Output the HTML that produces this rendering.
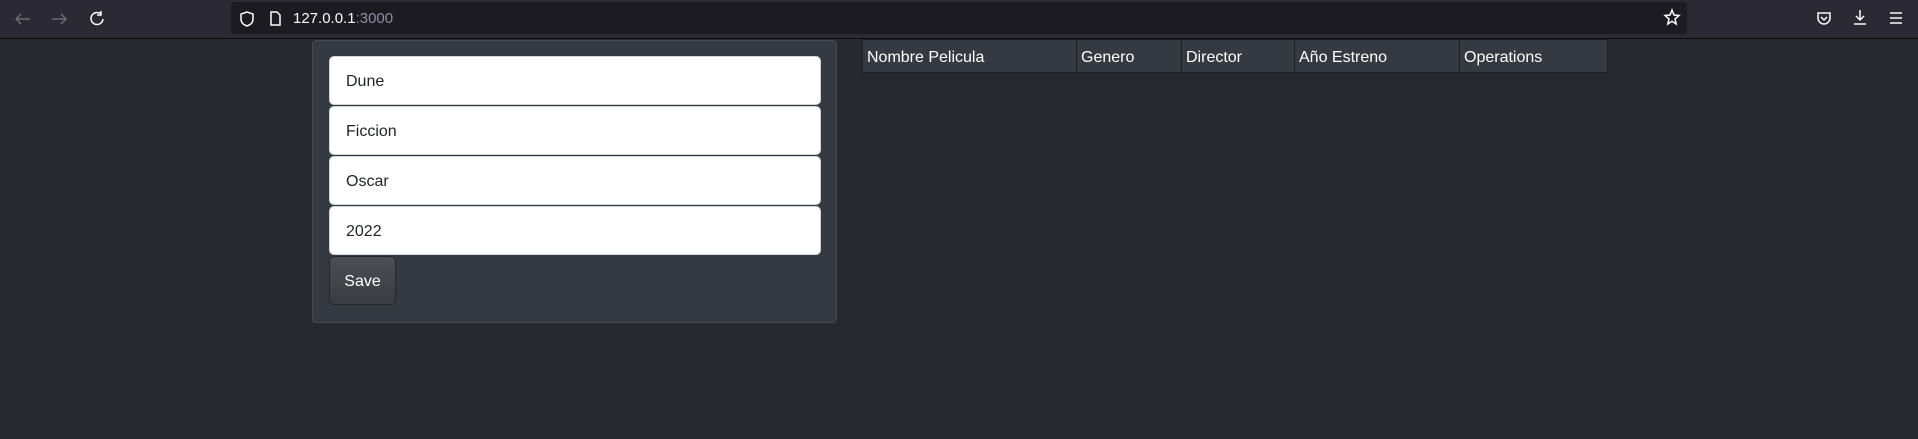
<!DOCTYPE html>
<html><head><style>
*{box-sizing:border-box;margin:0;padding:0}
body{width:1918px;height:439px;background:#26292d;font-family:"Liberation Sans",sans-serif;position:relative;overflow:hidden}
.tb{position:absolute;left:0;top:0;width:1918px;height:39px;background:#2b2a33;border-bottom:1px solid #0c0c0d}
.url{position:absolute;left:231px;top:2px;width:1456px;height:32px;background:#1c1b22;border-radius:4px}
.urltext{position:absolute;left:293px;top:10px;font-size:15px;color:#fbfbfe}
.urltext span{color:#8f8f9d}
svg{position:absolute}
.card{position:absolute;left:312px;top:40px;width:525px;height:283px;background:#343a40;border:1px solid #454b52;border-radius:4px}
.in{position:absolute;left:329px;width:492px;height:49px;background:#fff;border:1px solid #ced4da;border-radius:5px;font-size:16px;color:#212529;padding:16px 0 0 16px}
.btn{position:absolute;left:329px;top:256px;width:67px;height:49px;background:linear-gradient(#4a4f55,#393d42);border:1px solid #23272b;border-radius:5px;color:#fff;font-size:16px;padding-top:16px;text-align:center}
table{position:absolute;left:862px;top:39px;border-collapse:collapse;background:#343a40}
td{border:1px solid #1d2023;height:33px;color:#fff;font-size:16px;padding:3px 4px 0;vertical-align:middle}
</style></head><body>
<div class="tb">
<div class="url"></div>
<svg width="1918" height="38" fill="none" stroke-width="1.5">
<path d="M16 19h14M16 19l5-5M16 19l5 5" stroke="#6c6b72"/>
<path d="M66 19H52M66 19l-5-5M66 19l-5 5" stroke="#6c6b72"/>
<path d="M101 14a6 6 0 1 0 2 5M101 11v4h-4" stroke="#fbfbfe"/>
<path d="M247 12l-6 2v5c0 4 3 6 6 7 3-1 6-3 6-7v-5z" stroke="#fbfbfe"/>
<path d="M271 12h6l3 3v10h-9z" stroke="#fbfbfe"/>
<path d="M1672 10l2 5 5 .5-4 3.5 1.2 5-4.2-2.7-4.2 2.7 1.2-5-4-3.5 5-.5z" stroke="#fbfbfe"/>
<path d="M1818 13h12v5a6 6 0 0 1-12 0z M1821 17l3 3 3-3" stroke="#fbfbfe"/>
<path d="M1860 10v10M1856 16l4 4 4-4M1854 24h12" stroke="#fbfbfe"/>
<path d="M1890 13h12M1890 18h12M1890 23h12" stroke="#fbfbfe"/>
</svg>
<div class="urltext">127.0.0.1<span>:3000</span></div>
</div>
<div class="card"></div>
<div class="in" style="top:56px">Dune</div>
<div class="in" style="top:106px">Ficcion</div>
<div class="in" style="top:156px">Oscar</div>
<div class="in" style="top:206px">2022</div>
<div class="btn">Save</div>
<table><tr>
<td style="width:214px">Nombre Pelicula</td>
<td style="width:105px">Genero</td>
<td style="width:113px">Director</td>
<td style="width:165px">Año Estreno</td>
<td style="width:148px">Operations</td>
</tr></table>
</body></html>
